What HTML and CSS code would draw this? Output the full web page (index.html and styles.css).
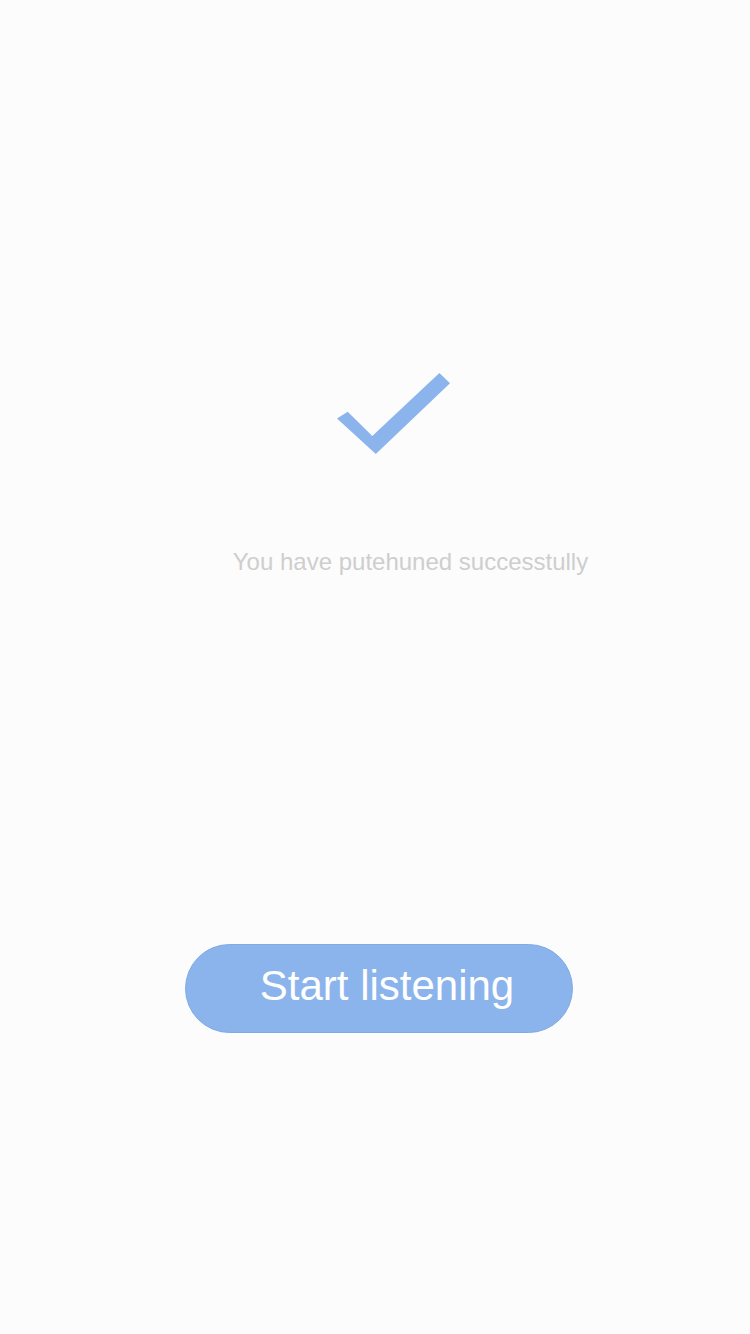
FILE: index.html
```html
<!DOCTYPE html>
<html lang="en">
<head>
<meta charset="utf-8">
<meta name="viewport" content="width=device-width, initial-scale=1">
<title>Success</title>
<link rel="stylesheet" href="styles.css">
</head>
<body>
<main class="screen">
  <svg class="check" viewBox="0 0 114 82" aria-hidden="true">
    <path d="M0 45.500 L10.700 38.700 L35.300 63 L102.400 0 L113 10.300 L38.800 81 Z"/>
  </svg>
  <p class="message">You have putehuned successtully</p>
  <button class="start" type="button">Start listening</button>
</main>
</body>
</html>
```

FILE: styles.css
```css
* {
  box-sizing: border-box;
}

body {
  margin: 0;
  background: #fcfcfc;
  font-family: "Liberation Sans", Arial, sans-serif;
}

.screen {
  display: flex;
  flex-direction: column;
  align-items: center;
  min-height: 100vh;
  padding: 373px 24px 48px;
}

.check {
  width: 114px;
  height: 82px;
  margin-left: 38px;
  fill: #8bb4ec;
}

.message {
  margin: 93px 0 0;
  padding-left: 71px;
  color: #cecece;
  font-size: 24px;
  line-height: 28px;
}

.start {
  width: 388px;
  max-width: 100%;
  height: 89px;
  margin: 368px 0 0 8px;
  padding: 0 0 6px 16px;
  border: 1px solid #80abe6;
  border-radius: 45px;
  background: #8bb4ec;
  color: #ffffff;
  font-family: inherit;
  font-size: 42px;
  line-height: 48px;
}
```
